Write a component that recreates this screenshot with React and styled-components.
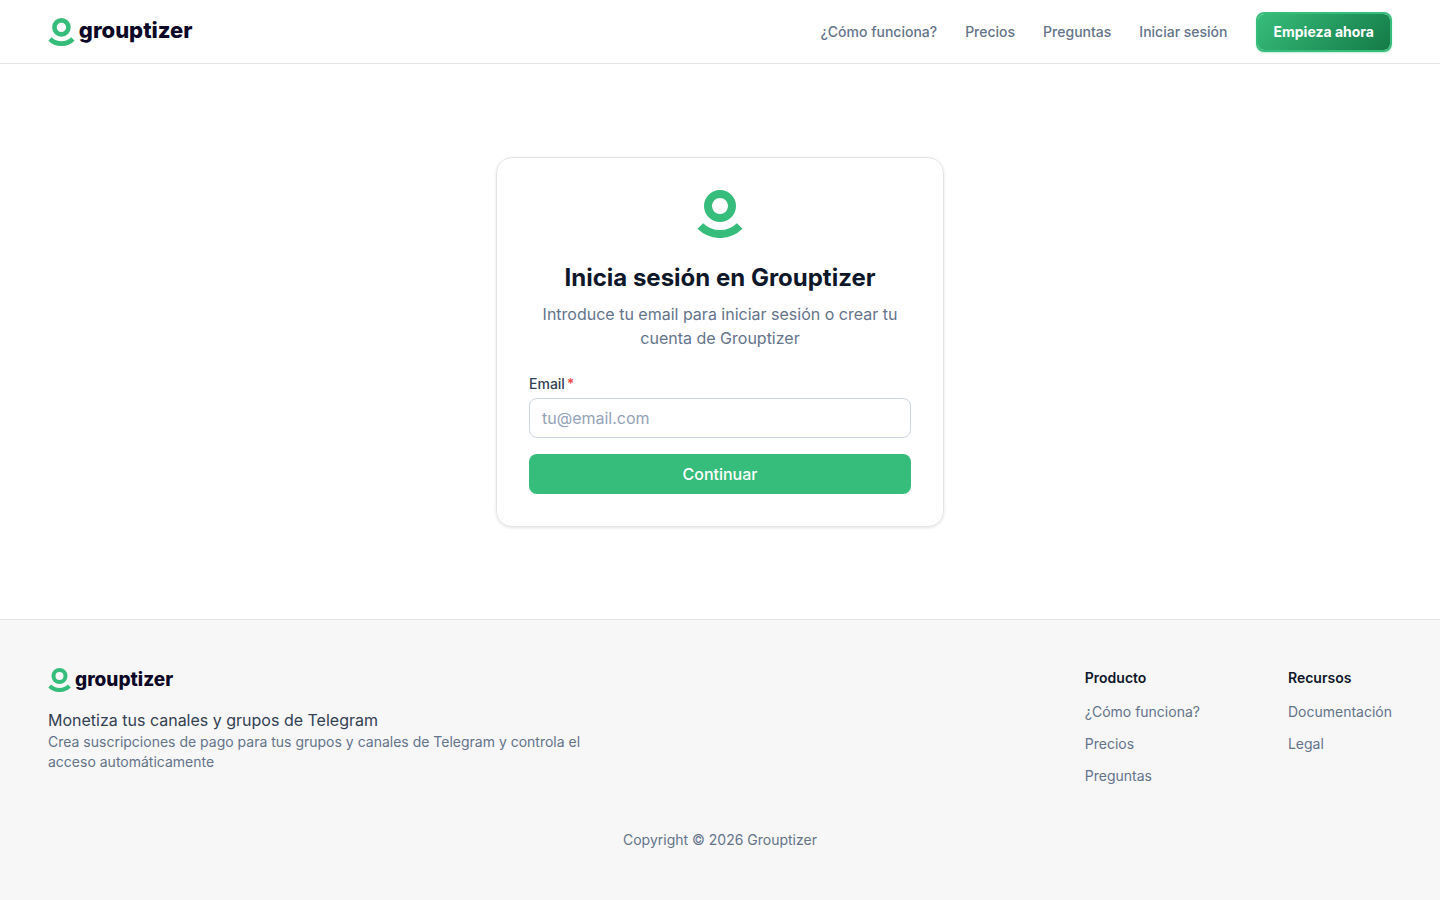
import React from 'react';
import styled, { createGlobalStyle, ThemeProvider } from 'styled-components';

const theme = {
    green: '#37bd7b',
    darkGreen: '#147a47',
    ink: '#0f172a',
    text: '#334155',
    muted: '#64748b',
    placeholder: '#94a3b8',
    inputBorder: '#cbd5e1',
    line: '#e2e4e8',
    footerBackground: '#f7f7f7',
    wordmark: '#0d0828',
};

const GlobalStyle = createGlobalStyle`
    *, *::before, *::after {
        box-sizing: border-box;
    }

    body {
        margin: 0;
        background: #fff;
        font-family: Inter, sans-serif;
        font-size: 16px;
        line-height: 24px;
    }

    h1, h2, p, ul {
        margin: 0;
        padding: 0;
    }

    ul {
        list-style: none;
    }
`;

const Page = styled.div`
    display: flex;
    flex-flow: column nowrap;
    min-height: 100vh;
`;

const Header = styled.header`
    display: flex;
    justify-content: space-between;
    align-items: center;
    height: 64px;
    padding: 0 48px;
    border-bottom: 1px solid ${props => props.theme.line};
`;

const Brand = styled.a`
    display: flex;
    align-items: flex-start;
    gap: 4px;
    color: ${props => props.theme.wordmark};
    font-size: ${props => (props.$small ? '19px' : '22px')};
    font-weight: 800;
    line-height: 24px;
    text-decoration: none;
`;

const Nav = styled.nav`
    display: flex;
    align-items: center;
    gap: 28px;
`;

const TextLink = styled.a`
    color: ${props => props.theme.muted};
    font-size: 14px;
    font-weight: ${props => (props.$medium ? 500 : 400)};
    line-height: 20px;
    text-decoration: none;
`;

const StartButton = styled.button`
    height: 40px;
    padding: 0 16px;
    background: linear-gradient(135deg, ${props => props.theme.green}, ${props => props.theme.darkGreen}) padding-box;
    border: 2px solid ${props => props.theme.green};
    border-radius: 8px;
    box-shadow: 0 1px 2px rgba(55, 189, 123, 0.3);
    color: #fff;
    font-family: inherit;
    font-size: 14px;
    font-weight: 700;
    cursor: pointer;
`;

const Main = styled.main`
    display: flex;
    flex: 1;
    justify-content: center;
    align-items: center;
    padding: 48px 16px;
`;

const Card = styled.form`
    display: flex;
    flex-flow: column nowrap;
    width: 100%;
    max-width: 448px;
    padding: 32px;
    border: 1px solid ${props => props.theme.line};
    border-radius: 16px;
    box-shadow: 0 1px 3px rgba(15, 23, 42, 0.12);
`;

const CardHead = styled.div`
    display: flex;
    flex-flow: column nowrap;
    align-items: center;
    margin-bottom: 24px;
    text-align: center;
`;

const Title = styled.h1`
    margin: 24px 0 8px;
    color: ${props => props.theme.ink};
    font-size: 24px;
    font-weight: 700;
    line-height: 32px;
`;

const Subtitle = styled.p`
    color: ${props => props.theme.muted};
`;

const Label = styled.label`
    margin-bottom: 4px;
    color: ${props => props.theme.text};
    font-size: 14px;
    font-weight: 500;
    line-height: 20px;
`;

const Required = styled.span`
    margin-left: 2px;
    color: #ef4444;
`;

const Input = styled.input`
    width: 100%;
    height: 40px;
    padding: 0 12px;
    background: #fff;
    border: 1px solid ${props => props.theme.inputBorder};
    border-radius: 8px;
    color: ${props => props.theme.ink};
    font-family: inherit;
    font-size: 16px;

    &::placeholder {
        color: ${props => props.theme.placeholder};
    }
`;

const SubmitButton = styled.button`
    height: 40px;
    margin-top: 16px;
    background: ${props => props.theme.green};
    border: none;
    border-radius: 8px;
    color: #fff;
    font-family: inherit;
    font-size: 16px;
    font-weight: 500;
    cursor: pointer;
`;

const Footer = styled.footer`
    padding: 48px;
    background: ${props => props.theme.footerBackground};
    border-top: 1px solid ${props => props.theme.line};
`;

const FooterTop = styled.div`
    display: flex;
    justify-content: space-between;
    gap: 48px;
`;

const About = styled.div`
    display: flex;
    flex-flow: column nowrap;
    align-items: flex-start;
    max-width: 560px;
`;

const Tagline = styled.p`
    margin-top: 16px;
    color: ${props => props.theme.text};
`;

const SmallText = styled.p`
    color: ${props => props.theme.muted};
    font-size: 14px;
    line-height: 20px;
`;

const Columns = styled.div`
    display: flex;
    gap: 88px;
`;

const ColumnTitle = styled.h2`
    margin-bottom: 14px;
    color: ${props => props.theme.ink};
    font-size: 14px;
    font-weight: 600;
    line-height: 20px;
`;

const LinkList = styled.ul`
    display: flex;
    flex-flow: column nowrap;
    gap: 12px;

    & li {
        display: flex;
    }
`;

const Copyright = styled(
    SmallText
)`
    margin-top: 44px;
    padding-bottom: 2px;
    text-align: center;
`;

const navLinks = ['¿Cómo funciona?', 'Precios', 'Preguntas', 'Iniciar sesión'];

const footerColumns = [
    { title: 'Producto', links: ['¿Cómo funciona?', 'Precios', 'Preguntas'] },
    { title: 'Recursos', links: ['Documentación', 'Legal'] },
];

const Logo = ({ height }) => (
    <svg height={height} viewBox="0 0 46 48" fill="none" stroke={theme.green} strokeWidth="8" aria-hidden="true">
        <circle cx="23" cy="16" r="12" />
        <path d="M3.3 36 A28.2 28.2 0 0 0 42.7 36" />
    </svg>
);

const App = () => {
    return(
        <ThemeProvider theme={theme}>
            <GlobalStyle />
            <Page>
                <Header>
                    <Brand href="#">
                        <Logo height={28} />
                        grouptizer
                    </Brand>
                    <Nav>
                        {navLinks.map(link => (
                            <TextLink key={link} href="#" $medium>{link}</TextLink>
                        ))}
                        <StartButton type="button">Empieza ahora</StartButton>
                    </Nav>
                </Header>
                <Main>
                    <Card>
                        <CardHead>
                            <Logo height={48} />
                            <Title>Inicia sesión en Grouptizer</Title>
                            <Subtitle>Introduce tu email para iniciar sesión o crear tu cuenta de Grouptizer</Subtitle>
                        </CardHead>
                        <Label htmlFor="email">
                            Email<Required>*</Required>
                        </Label>
                        <Input id="email" type="email" placeholder="tu@email.com" />
                        <SubmitButton type="submit">Continuar</SubmitButton>
                    </Card>
                </Main>
                <Footer>
                    <FooterTop>
                        <About>
                            <Brand href="#" $small>
                                <Logo height={24} />
                                grouptizer
                            </Brand>
                            <Tagline>Monetiza tus canales y grupos de Telegram</Tagline>
                            <SmallText>
                                Crea suscripciones de pago para tus grupos y canales de Telegram y controla el acceso automáticamente
                            </SmallText>
                        </About>
                        <Columns>
                            {footerColumns.map(column => (
                                <div key={column.title}>
                                    <ColumnTitle>{column.title}</ColumnTitle>
                                    <LinkList>
                                        {column.links.map(link => (
                                            <li key={link}>
                                                <TextLink href="#">{link}</TextLink>
                                            </li>
                                        ))}
                                    </LinkList>
                                </div>
                            ))}
                        </Columns>
                    </FooterTop>
                    <Copyright>Copyright © 2026 Grouptizer</Copyright>
                </Footer>
            </Page>
        </ThemeProvider>
    );
}

export default App;
